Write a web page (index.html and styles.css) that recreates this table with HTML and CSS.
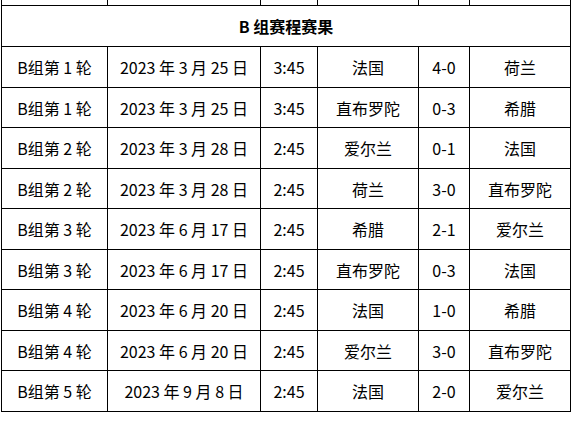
FILE: index.html
```html
<!DOCTYPE html>
<html lang="zh">
<head>
<meta charset="utf-8">
<title>B组赛程赛果</title>
<link rel="stylesheet" href="styles.css">
</head>
<body>
<div class="page">
<table class="schedule">
  <colgroup>
    <col class="c-round"><col class="c-date"><col class="c-time"><col class="c-team"><col class="c-score"><col class="c-team2">
  </colgroup>
  <tr class="prev"><td></td><td></td><td></td><td></td><td></td><td></td></tr>
  <tr class="head"><th colspan="6">B 组赛程赛果</th></tr>
  <tr><td>B组第 1 轮</td><td>2023 年 3 月 25 日</td><td>3:45</td><td>法国</td><td>4-0</td><td>荷兰</td></tr>
  <tr><td>B组第 1 轮</td><td>2023 年 3 月 25 日</td><td>3:45</td><td>直布罗陀</td><td>0-3</td><td>希腊</td></tr>
  <tr><td>B组第 2 轮</td><td>2023 年 3 月 28 日</td><td>2:45</td><td>爱尔兰</td><td>0-1</td><td>法国</td></tr>
  <tr><td>B组第 2 轮</td><td>2023 年 3 月 28 日</td><td>2:45</td><td>荷兰</td><td>3-0</td><td>直布罗陀</td></tr>
  <tr><td>B组第 3 轮</td><td>2023 年 6 月 17 日</td><td>2:45</td><td>希腊</td><td>2-1</td><td>爱尔兰</td></tr>
  <tr><td>B组第 3 轮</td><td>2023 年 6 月 17 日</td><td>2:45</td><td>直布罗陀</td><td>0-3</td><td>法国</td></tr>
  <tr><td>B组第 4 轮</td><td>2023 年 6 月 20 日</td><td>2:45</td><td>法国</td><td>1-0</td><td>希腊</td></tr>
  <tr><td>B组第 4 轮</td><td>2023 年 6 月 20 日</td><td>2:45</td><td>爱尔兰</td><td>3-0</td><td>直布罗陀</td></tr>
  <tr><td>B组第 5 轮</td><td>2023 年 9 月 8 日</td><td>2:45</td><td>法国</td><td>2-0</td><td>爱尔兰</td></tr>
</table>
</div>
</body>
</html>
```
FILE: styles.css
```css
html, body {
  margin: 0;
  padding: 0;
  background: #ffffff;
}
.page {
  padding-left: 1px;
  overflow: hidden;
  height: 422px;
}
.schedule {
  border-collapse: collapse;
  table-layout: fixed;
  width: 569px;
  margin-top: -35px;
  font-family: "Noto Sans CJK SC", sans-serif;
  font-size: 16px;
  color: #000000;
}
.c-round { width: 106px; }
.c-date { width: 153px; }
.c-time { width: 57px; }
.c-team { width: 101px; }
.c-score { width: 51px; }
.c-team2 { width: 101px; }
.schedule td,
.schedule th {
  border: 1px solid #000000;
  text-align: center;
  vertical-align: middle;
  padding: 0;
  white-space: nowrap;
  line-height: 20px;
}
.schedule tr { height: 40.5px; }
.schedule tr.prev { height: 40px; }
.schedule tr.head { height: 41.4px; }
.schedule th {
  font-weight: bold;
}
```
